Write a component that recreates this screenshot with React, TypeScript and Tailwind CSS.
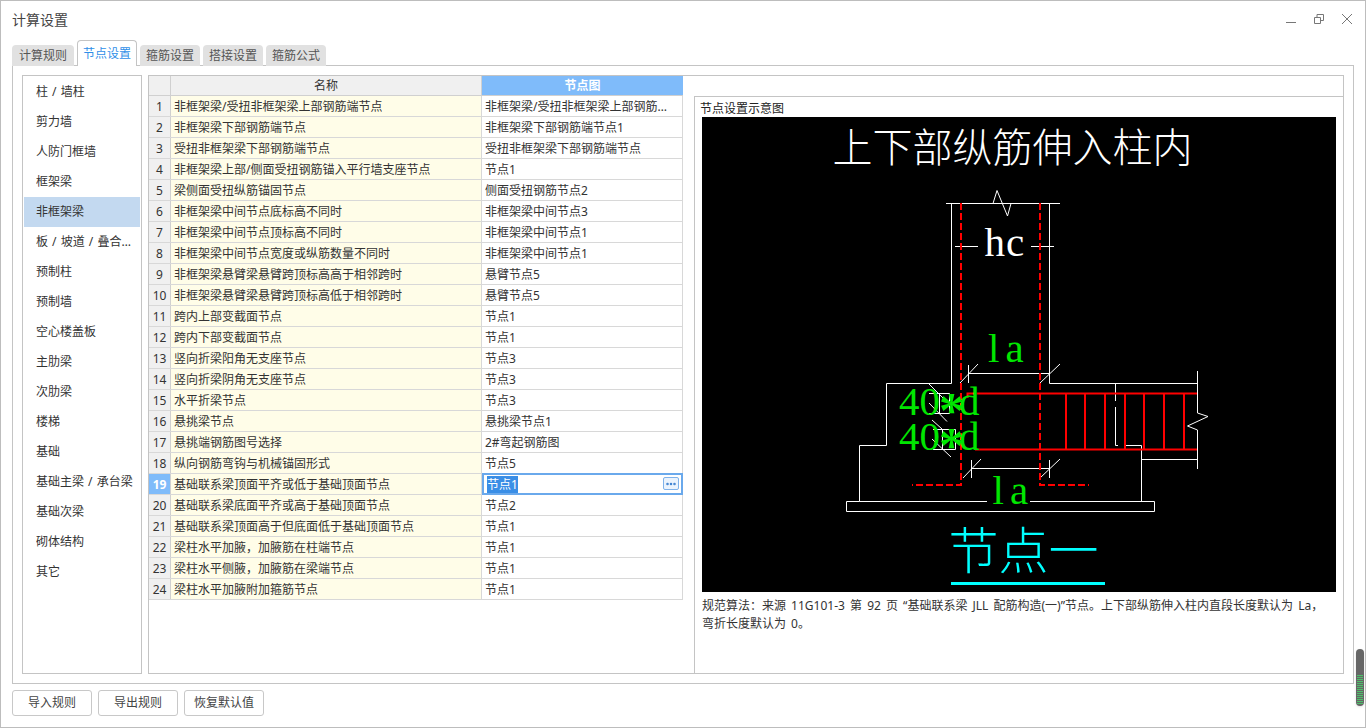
import { MoreHorizontal } from "lucide-react";

const tabs = ["计算规则", "节点设置", "箍筋设置", "搭接设置", "箍筋公式"];

const categories = [
  "柱 / 墙柱",
  "剪力墙",
  "人防门框墙",
  "框架梁",
  "非框架梁",
  "板 / 坡道 / 叠合板",
  "预制柱",
  "预制墙",
  "空心楼盖板",
  "主肋梁",
  "次肋梁",
  "楼梯",
  "基础",
  "基础主梁 / 承台梁",
  "基础次梁",
  "砌体结构",
  "其它",
];

const rows = [
  ["非框架梁/受扭非框架梁上部钢筋端节点", "非框架梁/受扭非框架梁上部钢筋端节点1"],
  ["非框架梁下部钢筋端节点", "非框架梁下部钢筋端节点1"],
  ["受扭非框架梁下部钢筋端节点", "受扭非框架梁下部钢筋端节点"],
  ["非框架梁上部/侧面受扭钢筋锚入平行墙支座节点", "节点1"],
  ["梁侧面受扭纵筋锚固节点", "侧面受扭钢筋节点2"],
  ["非框架梁中间节点底标高不同时", "非框架梁中间节点3"],
  ["非框架梁中间节点顶标高不同时", "非框架梁中间节点1"],
  ["非框架梁中间节点宽度或纵筋数量不同时", "非框架梁中间节点1"],
  ["非框架梁悬臂梁悬臂跨顶标高高于相邻跨时", "悬臂节点5"],
  ["非框架梁悬臂梁悬臂跨顶标高低于相邻跨时", "悬臂节点5"],
  ["跨内上部变截面节点", "节点1"],
  ["跨内下部变截面节点", "节点1"],
  ["竖向折梁阳角无支座节点", "节点3"],
  ["竖向折梁阴角无支座节点", "节点3"],
  ["水平折梁节点", "节点3"],
  ["悬挑梁节点", "悬挑梁节点1"],
  ["悬挑端钢筋图号选择", "2#弯起钢筋图"],
  ["纵向钢筋弯钩与机械锚固形式", "节点5"],
  ["基础联系梁顶面平齐或低于基础顶面节点", "节点1"],
  ["基础联系梁底面平齐或高于基础顶面节点", "节点2"],
  ["基础联系梁顶面高于但底面低于基础顶面节点", "节点1"],
  ["梁柱水平加腋，加腋筋在柱端节点", "节点1"],
  ["梁柱水平侧腋，加腋筋在梁端节点", "节点1"],
  ["梁柱水平加腋附加箍筋节点", "节点1"],
];

function NodeDiagram() {
  const stirrups = [1066, 1085, 1105, 1125, 1144, 1164, 1184];
  return (
    <svg viewBox="702 117 634 475" width="634" height="475" className="block">
      <text x="1012.5" y="162" fill="#fff" fontSize="40" fontWeight="300" textAnchor="middle" fontFamily="'Noto Sans CJK SC', serif">
        上下部纵筋伸入柱内
      </text>

      {/* 柱和基础轮廓 */}
      <g stroke="#fff" strokeWidth="1" fill="none">
        <path d="M946 203.5H1060M993 203.5L997 190.5L1007.5 216L1011 203.5" />
        <path d="M951.5 203.5V383.5H886.5V445.5H859.5V501.5H987M1030 501.5H1154.5V511.5H846.5V501.5H859.5" />
        <path d="M1049.5 203.5V383.5H1197.5" />
        <path d="M1197.5 371V413L1208 416.5L1187.5 426L1197.5 430V469" />
        <path d="M1125 445.5H1141.5V501.5M1141.5 459.5H1197.5" />
        <path d="M1115.5 383.5V401M1115.5 407V445.5H1118" />
        <path d="M955 246.5H978M1031 246.5H1054" />
        <path d="M968.5 373.5H1050M968.5 365V383M960 383L978 364M1040 383L1060 364" />
        <path d="M971.5 468.5H1049.5M971.5 460V478M1049.5 460V478M963 478L981 459M1040 478L1060 459" />
        <path d="M929 393.5H949.5V413.5H929M939.5 393.5V413.5M929 384L946 401M929 403L947 421.5" />
        <path d="M933 429.5H955.5V449.5H933M942.5 429.5V449.5M932 420L942 429M932 439L951 457" />
      </g>

      {/* 钢筋 */}
      <g stroke="#f00" fill="none">
        <path d="M961 203V485H912M1040 203V485H1089" strokeWidth="2" strokeDasharray="7 3" />
        <path d="M967.5 398V393.5H1197M975 449.5H1197" strokeWidth="2" />
        {stirrups.map((x) => (
          <path key={x} d={`M${x} 393V449`} strokeWidth="2" />
        ))}
      </g>

      <g fontFamily="'Liberation Serif', serif" fontSize="41">
        <text x="984.5" y="256" fill="#fff" letterSpacing="1">hc</text>
        <g fill="#00e600">
          <text x="988" y="362" letterSpacing="6">la</text>
          <text x="992.5" y="504" letterSpacing="6">la</text>
          <text x="899" y="415">
            40
            <tspan x="939" dy="11.5" fontSize="50" fontWeight="700">*</tspan>
            <tspan x="959" dy="-11.5">d</tspan>
          </text>
          <text x="899" y="450">
            40
            <tspan x="939" dy="11.5" fontSize="50" fontWeight="700">*</tspan>
            <tspan x="959" dy="-11.5">d</tspan>
          </text>
        </g>
      </g>

      <text x="1023.5" y="569" fill="#00ffff" fontSize="50" fontWeight="300" textAnchor="middle" fontFamily="'Noto Sans CJK SC', serif">
        节点一
      </text>
      <rect x="951" y="582" width="154" height="3" fill="#00ffff" />
    </svg>
  );
}

export default function App() {
  return (
    <div className="relative flex h-[728px] w-[1366px] flex-col overflow-hidden border border-[#bdbdbd] bg-white text-xs text-[#333] [font-family:'Noto_Sans','Noto_Sans_CJK_SC',sans-serif]">
      {/* Title bar */}
      <div className="flex h-[39px] shrink-0 items-center justify-between pl-[11px] pr-[13px]">
        <span className="text-[14px] text-[#444]">计算设置</span>
        <div className="mb-[3px] flex items-center gap-[18px] text-[#777]">
          <svg width="10" height="10" viewBox="0 0 10 10" stroke="currentColor" fill="none">
            <path d="M0 8.5H10" />
          </svg>
          <svg width="10" height="10" viewBox="0 0 10 10" stroke="currentColor" fill="none">
            <path d="M0.5 3.5H6.5V9.5H0.5ZM3 3V0.5H9.5V6.5H7" />
          </svg>
          <svg width="10" height="10" viewBox="0 0 10 10" stroke="currentColor" fill="none">
            <path d="M0 0L10 10M10 0L0 10" />
          </svg>
        </div>
      </div>

      {/* Tabs */}
      <div className="relative z-10 -mb-px flex h-[26px] shrink-0 items-end gap-[3px] pl-[11px]">
        {tabs.map((tab, i) =>
          i === 1 ? (
            <div key={tab} className="flex h-[26px] w-[60px] items-center justify-center rounded-t border border-b-0 border-[#c4c4c4] bg-white text-[#2f8fe8]">
              {tab}
            </div>
          ) : (
            <div
              key={tab}
              className={`flex h-[21px] items-center justify-center rounded-t bg-[#e1e1e1] text-[#555] ${i === 0 ? "w-[62px]" : "w-[60px]"}`}
            >
              {tab}
            </div>
          ),
        )}
      </div>

      {/* Panel */}
      <div className="ml-[11px] flex h-[619px] w-[1342px] shrink-0 gap-[6px] border border-[#c4c4c4] p-[9px]">
        <div className="flex w-[120px] shrink-0 flex-col border border-[#c4c4c4] px-px pt-px [word-spacing:1px]">
          {categories.map((c) => (
            <div
              key={c}
              className={`flex h-[30px] items-center pl-[12px] ${c === "非框架梁" ? "bg-[#c3d9f0]" : ""}`}
            >
              <span className={`truncate ${c.startsWith("板") ? "max-w-[96px]" : ""}`}>{c}</span>
            </div>
          ))}
        </div>

        <div className="flex min-w-0 flex-1 border border-[#c4c4c4]">
          {/* Grid */}
          <div className="w-[534px] shrink-0">
            <div className="flex h-[20px] border-b border-[#d0d0d0] bg-[#f0f0f0]">
              <div className="w-[22px] shrink-0 border-r border-[#d0d0d0]" />
              <div className="flex w-[311px] shrink-0 items-center justify-center border-r border-[#d0d0d0] pt-px">名称</div>
              <div className="flex w-[201px] shrink-0 items-center justify-center bg-[#7fbbfa] pt-px font-bold text-white">节点图</div>
            </div>
            {rows.map(([name, value], i) => {
              const active = i === 18;
              return (
                <div key={i} className="flex h-[21px] border-b border-[#d8d8d8]">
                  <div
                    className={`flex w-[22px] shrink-0 items-center justify-center border-r border-[#d0d0d0] pt-px ${
                      active ? "bg-[#7fbbfa] font-bold text-white" : "bg-[#f0f0f0]"
                    }`}
                  >
                    {i + 1}
                  </div>
                  <div className="flex w-[311px] shrink-0 items-center border-r border-[#d8d8d8] bg-[#fffde8] pl-[3px] pt-px">
                    <span className="truncate">{name}</span>
                  </div>
                  {active ? (
                    <div className="relative -my-px flex h-[22px] w-[201px] shrink-0 items-center border-2 border-[#6aa9ec] bg-white pl-[3px]">
                      <span className="bg-[#3a8ee6] leading-[17px] text-white">{value}</span>
                      <span className="absolute right-[2px] top-[2px] flex h-[13px] w-[16px] items-center justify-center rounded-[2px] border border-[#7fb2ea] bg-[#eaf3fd] text-[#3a7fd0]">
                        <MoreHorizontal size={12} strokeWidth={3} />
                      </span>
                    </div>
                  ) : (
                    <div className="flex w-[201px] shrink-0 items-center border-r border-[#d8d8d8] pl-[3px] pr-[6px] pt-px">
                      <span className="truncate">{value}</span>
                    </div>
                  )}
                </div>
              );
            })}
          </div>

          {/* Preview */}
          <div className="ml-[11px] mt-[20px] flex min-w-0 flex-1 flex-col border-l border-t border-[#c4c4c4] pl-[5px] pr-[7px]">
            <div className="h-[20px] pt-[4px] leading-[16px] text-[#222]">节点设置示意图</div>
            <div className="ml-[2px] h-[475px] w-[634px] shrink-0 bg-black">
              <NodeDiagram />
            </div>
            <p className="ml-[2px] mt-[5px] w-[634px] leading-[18px] [word-spacing:2px]">
              规范算法：来源 11G101-3 第 92 页 “基础联系梁 JLL 配筋构造(一)”节点。上下部纵筋伸入柱内直段长度默认为 La，
              <br />
              弯折长度默认为 0。
            </p>
          </div>
        </div>
      </div>

      {/* Footer buttons */}
      <div className="mt-[6px] flex gap-[6px] pl-[11px]">
        {["导入规则", "导出规则", "恢复默认值"].map((b) => (
          <button key={b} className="flex h-[26px] w-[80px] items-center justify-center rounded-[3px] border border-[#c8c8c8] bg-white text-[#444]">
            {b}
          </button>
        ))}
      </div>

      {/* Scroll thumb over the window edge */}
      <div className="absolute left-[1355px] top-[648px] flex h-[57px] w-[8px] flex-col justify-end overflow-hidden rounded-[4px] bg-[#666] pb-[2px] shadow">
        <div className="mx-px h-[29px] bg-[repeating-linear-gradient(to_bottom,#4cc26a_0,#4cc26a_1px,#666_1px,#666_2px)]" />
      </div>
    </div>
  );
}
